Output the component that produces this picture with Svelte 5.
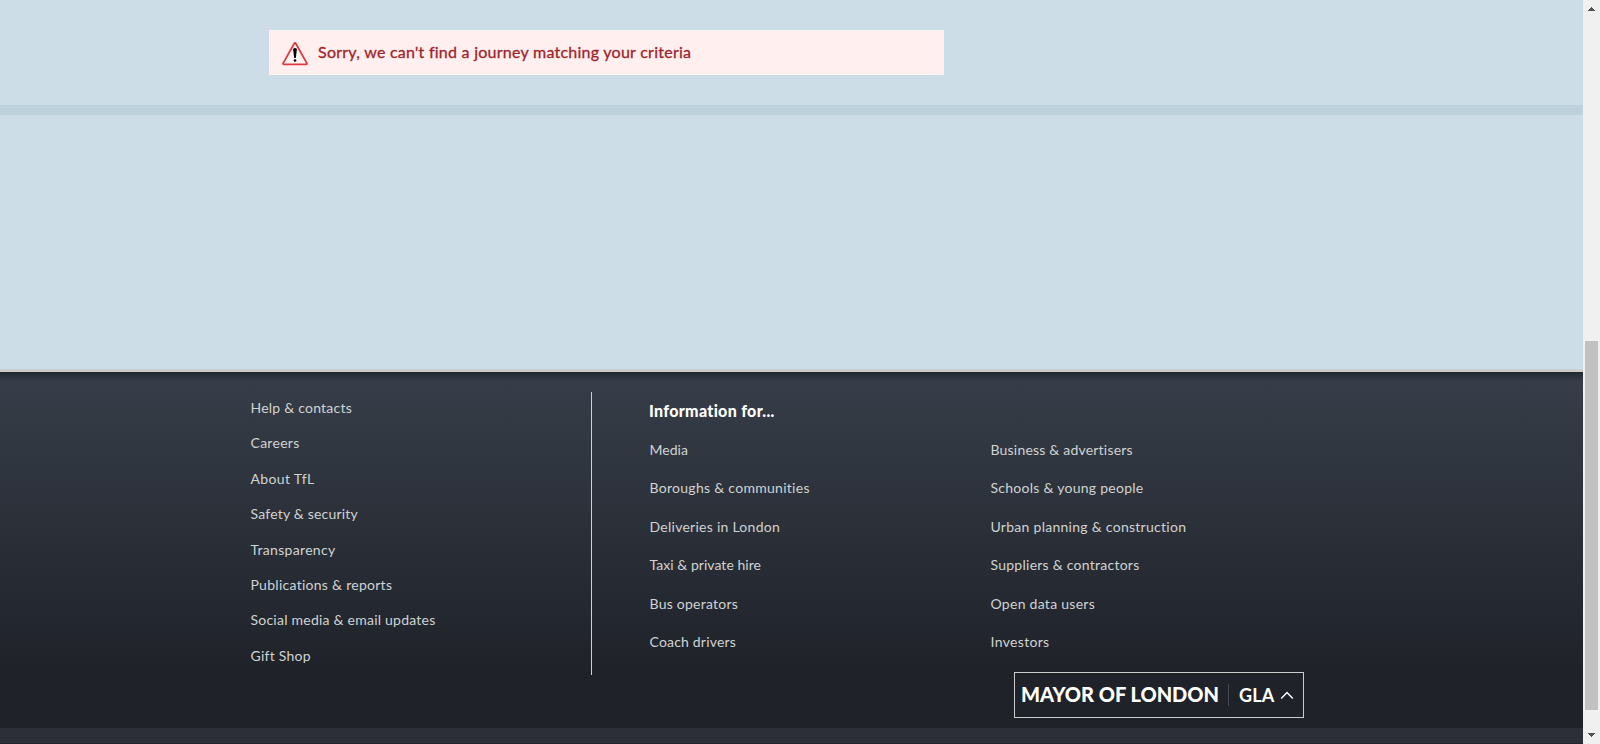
<script>
  const help = [
    ['Help & contacts', 100.5], ['Careers', 48], ['About TfL', 63], ['Safety & security', 106.5],
    ['Transparency', 84], ['Publications & reports', 141], ['Social media & email updates', 184], ['Gift Shop', 59]
  ];
  const info = [
    ['Media', 37.5], ['Business & advertisers', 141.5],
    ['Boroughs & communities', 159.5], ['Schools & young people', 152],
    ['Deliveries in London', 129.5], ['Urban planning & construction', 195],
    ['Taxi & private hire', 110.5], ['Suppliers & contractors', 148],
    ['Bus operators', 87.5], ['Open data users', 103.5],
    ['Coach drivers', 85.5], ['Investors', 58]
  ];

  // Tracks a label out to its set measure.
  function track(node, width) {
    const natural = node.getBoundingClientRect().width;
    const spacing = (width + 1 - natural) / node.textContent.length;
    node.style.letterSpacing = `${spacing}px`;
  }
</script>

<div class="page">
  <div class="content">
    <main>
      <div class="results">
        <div class="alert" role="alert">
          <svg width="26" height="24" viewBox="0 0 26 24">
            <path d="M12.1 1.7 1.2 21.1q-.5 1.2.8 1.2h22q1.3 0 .8-1.2L13.9 1.7q-.9-1.4-1.8 0Z" fill="#fff2f2" stroke="#dc3a3f" stroke-width="1.8" stroke-linejoin="round" />
            <path d="M11.1 7.5Q11 6 13 6t1.9 1.5L13.8 16h-1.6Z" />
            <circle cx="13" cy="18.5" r="1.35" />
          </svg>
          <span use:track={372}>Sorry, we can't find a journey matching your criteria</span>
        </div>
      </div>
      <div class="map"></div>
    </main>

    <footer>
      <div class="columns">
        <ul class="help">
          {#each help as [label, width]}
            <li><a href="#top" use:track={width}>{label}</a></li>
          {/each}
        </ul>
        <section>
          <h2><span use:track={125}>Information for...</span></h2>
          <ul class="info">
            {#each info as [label, width]}
              <li><a href="#top" use:track={width}>{label}</a></li>
            {/each}
          </ul>
          <div class="mayor">
            <span class="brand"><span use:track={197}>MAYOR OF LONDON</span></span>
            <span class="gla"><span use:track={34.5}>GLA</span></span>
            <svg width="14" height="9" viewBox="0 0 14 9"><path d="M1.2 7.6 7 1.6l5.8 6" fill="none" stroke="#fff" stroke-width="1.4" /></svg>
          </div>
        </section>
      </div>
    </footer>
    <div class="legal"></div>
  </div>

  <div class="scrollbar">
    <svg width="7" height="4" viewBox="0 0 7 4" shape-rendering="crispEdges"><path d="M3 0h1v1h1v1h1v1h1v1H0V3h1V2h1V1h1z" /></svg>
    <div class="thumb"></div>
    <svg width="7" height="4" viewBox="0 0 7 4" shape-rendering="crispEdges"><path d="M0 0h7v1H6v1H5v1H4v1H3V3H2V2H1V1H0z" /></svg>
  </div>
</div>

<style>
  :global(body) { margin: 0; overflow: hidden; }
  .page { display: flex; height: 744px; font-family: Lato, 'Open Sans', sans-serif; }
  .content { flex: 1; display: flex; flex-direction: column; }
  main { height: 369px; background: #ccdde7; }
  .results { height: 75px; padding: 30px 0 0 269px; border-bottom: 10px solid #bdd1dd; }
  .alert {
    box-sizing: border-box; width: 675px; height: 45px; padding: 3px 13px 0;
    display: flex; align-items: center; gap: 10px;
    background: #ffefef; color: #a1232a; font-size: 16px; font-weight: 400;
    -webkit-text-stroke: .3px #a1232a;
  }
  .alert > span { line-height: 20px; padding-bottom: 5px; }
  footer {
    box-sizing: border-box; height: 359px; border-top: 3px solid #ccc; padding-top: 20px;
    background: linear-gradient(#22262e, rgba(34, 38, 46, 0) 9px), linear-gradient(#373e49, #1f2229 300px);
  }
  .columns { display: flex; margin-left: 250px; }
  ul { list-style: none; margin: 0; padding: 0; }
  a { color: #d0d3d2; text-decoration: none; font-size: 14px; }
  span, a { white-space: nowrap; }
  .help {
    box-sizing: border-box; width: 342px; height: 283px; border-right: 1px solid #d0d0d0;
    display: grid; grid-auto-rows: 35.4px; line-height: 30px;
  }
  .help li { padding-left: .5px; }
  section { width: 711px; margin-left: 57px; display: flex; flex-direction: column; }
  h2 { margin: 7px 0 0; height: 32px; line-height: 24px; font-size: 16px; font-weight: 900; color: #fff; }
  .info { display: grid; grid-template-columns: 341px 1fr; grid-auto-rows: 38.4px; line-height: 36px; padding-left: .5px; }
  .mayor {
    box-sizing: border-box; width: 290px; height: 46px; margin: 11px 56px 0 auto; padding-left: 6px;
    border: 1px solid #ccc; display: flex; align-items: center;
    color: #fff;
  }
  .brand { width: 207px; font-size: 20px; font-weight: 900; line-height: 20px; padding-bottom: 2px; border-right: 1px solid #4a4b50; }
  .gla { width: 41px; padding-left: 10px; font-size: 18px; font-weight: 700; line-height: 24px; }
  .legal { flex: 1; background: #2c2e38; border-bottom: 1px solid #25232f; }
  .scrollbar {
    box-sizing: border-box; width: 17px; padding: 7px 0; background: #f0f0f0;
    display: flex; flex-direction: column; align-items: center; justify-content: space-between; fill: #505050;
  }
  .thumb { width: 13px; height: 369px; margin-top: 307px; background: #c1c1c1; }
</style>
